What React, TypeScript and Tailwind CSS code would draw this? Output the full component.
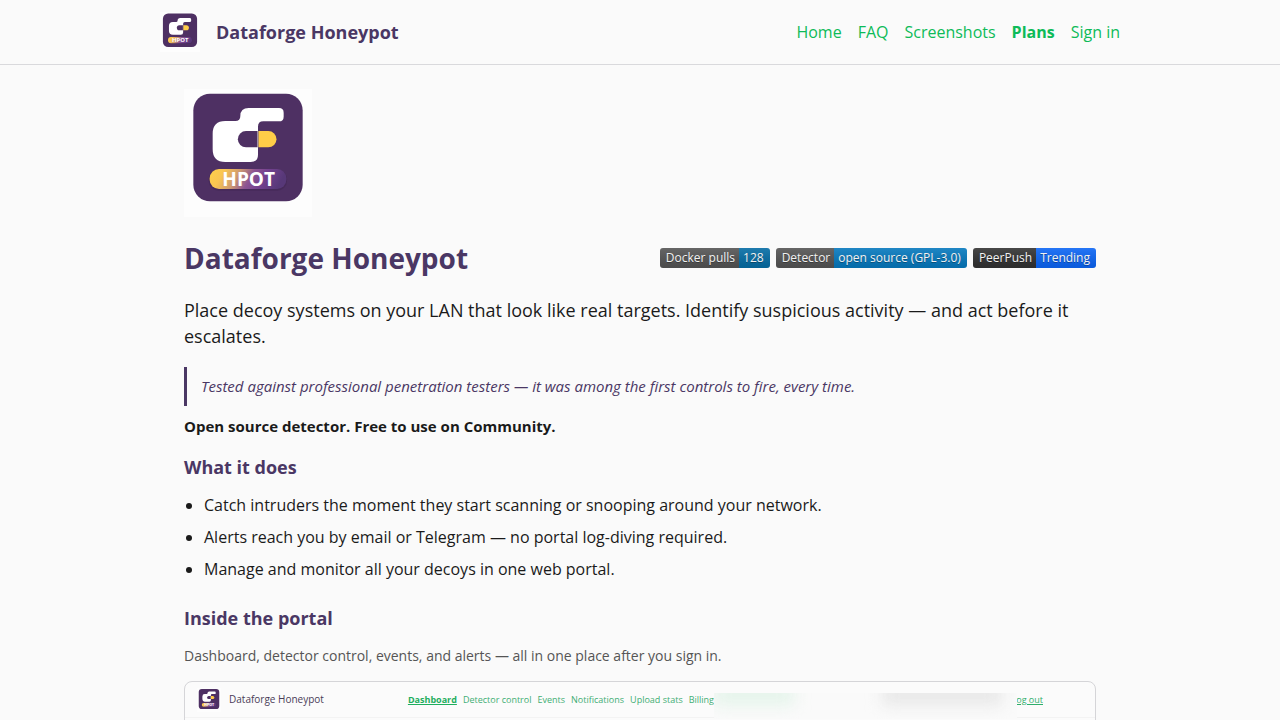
import clsx from "clsx";
import React, { useId } from "react";

const NAV_LINKS = [
  { label: "Home", href: "#home" },
  { label: "FAQ", href: "#faq" },
  { label: "Screenshots", href: "#screenshots" },
  { label: "Plans", href: "#plans", active: true },
  { label: "Sign in", href: "#sign-in" },
];

const BADGES = [
  { label: "Docker pulls", value: "128", labelBg: "bg-[#555555]", valueBg: "bg-[#066da5]" },
  { label: "Detector", value: "open source (GPL-3.0)", labelBg: "bg-[#555555]", valueBg: "bg-[#0779be]" },
  { label: "PeerPush", value: "Trending", labelBg: "bg-[#333333]", valueBg: "bg-[#0d66f5]" },
];

const FEATURES = [
  "Catch intruders the moment they start scanning or snooping around your network.",
  "Alerts reach you by email or Telegram — no portal log-diving required.",
  "Manage and monitor all your decoys in one web portal.",
];

const PORTAL_LINKS = ["Detector control", "Events", "Notifications", "Upload stats", "Billing"];

function Logo({ className }: { className?: string }) {
  const id = useId();
  return (
    <svg viewBox="12 15 384 384" className={className} role="img" aria-label="Dataforge Honeypot">
      <defs>
        <linearGradient id={id} x1="0" y1="0" x2="1" y2="0.15">
          <stop offset="0" stopColor="#ffd04a" />
          <stop offset="0.2" stopColor="#f9c552" />
          <stop offset="0.4" stopColor="#cf9a70" />
          <stop offset="0.58" stopColor="#8d5492" />
          <stop offset="0.75" stopColor="#744290" />
          <stop offset="1" stopColor="#573878" />
        </linearGradient>
      </defs>
      <rect x="12" y="15" width="384" height="384" fill="#fdfdfd" />
      <rect x="40" y="29" width="328" height="323" rx="50" fill="#4e3063" />
      <path
        fill="#fff"
        d="M206 72H297Q311 72 311 86V98Q311 112 297 112H250Q234 112 234 128V212Q234 234 212 234H136Q98 234 98 196V149Q98 111 136 111H166Q181 111 181 96Q181 72 206 72Z"
      />
      <path fill="#4e3063" d="M232 141H198A24.5 24.5 0 0 0 198 190H232Z" />
      <path fill="#ffcd48" d="M235 141H265A24.5 24.5 0 0 1 265 190H235Z" />
      <path fill="#8a7896" d="M232 141H235V190H232Z" />
      <rect x="86" y="257" width="235" height="63" rx="29" fill="#3b224e" opacity="0.4" />
      <rect x="89" y="255" width="230" height="60" rx="28" fill={`url(#${id})`} />
      <text
        x="206"
        y="305"
        textAnchor="middle"
        fontSize="57"
        fontWeight="700"
        fill="#fff"
        className="font-['Open_Sans',sans-serif]"
      >
        HPOT
      </text>
    </svg>
  );
}

function Badge({ label, value, labelBg, valueBg }: (typeof BADGES)[number]) {
  return (
    <a
      href="#badge"
      className="flex h-5 overflow-hidden rounded-[3px] text-xs leading-5 text-[#f2f2f2] text-shadow-[0_1px_0_rgb(1_1_1/0.3)]"
    >
      <span className={clsx("bg-linear-to-b from-white/10 to-black/10 pl-1.5 pr-1", labelBg)}>{label}</span>
      <span className={clsx("bg-linear-to-b from-white/10 to-black/10 pl-1 pr-1.5", valueBg)}>{value}</span>
    </a>
  );
}

function PortalPreview() {
  return (
    <div className="mt-[13px] overflow-hidden rounded-lg border border-[#d5d5d8] bg-[#fbfbfb]">
      <div className="relative flex h-9 items-center border-b border-[#f3f3f3] pl-3 text-[9px]">
        <Logo className="size-6" />
        <span className="ml-2 text-[10px] font-medium text-[#4a3c58]">Dataforge Honeypot</span>
        <nav className="ml-20 flex gap-1.5 pl-1 text-[#3fae74]">
          <a href="#dashboard" className="font-bold text-[#1fae5e] underline">
            Dashboard
          </a>
          {PORTAL_LINKS.map((link) => (
            <a key={link} href="#portal">
              {link}
            </a>
          ))}
        </nav>
        <a href="#logout" className="ml-auto mr-13 text-[#2fae6c] underline">
          Log out
        </a>
        {/* redacted account details */}
        <div className="absolute right-[78px] top-[11px] flex h-[26px] w-[303px] overflow-hidden bg-[#fafafa]">
          <div className="-mt-2 h-5 w-20 bg-[#e4f4ea] blur-[8px]" />
          <div className="-mt-2 ml-[88px] h-5 w-30 bg-[#e7e7e7] blur-[8px]" />
        </div>
      </div>
      <div className="h-96" />
    </div>
  );
}

export default function App() {
  return (
    <div className="min-h-screen bg-[#fafafa] font-['Open_Sans',sans-serif] text-[#1a1a1a]">
      <header className="border-b border-[#d9d9dc]">
        <div className="mx-auto flex h-16 max-w-[960px] items-center justify-between">
          <a href="#home" className="flex items-center gap-4 text-lg font-bold text-[#4a3764]">
            <Logo className="size-10" />
            Dataforge Honeypot
          </a>
          <nav className="flex gap-4">
            {NAV_LINKS.map((link) => (
              <a key={link.label} href={link.href} className={clsx("text-[#0dbb58]", link.active && "font-bold")}>
                {link.label}
              </a>
            ))}
          </nav>
        </div>
      </header>

      <main className="mx-auto max-w-[960px] px-6 pt-6 pb-12">
        <Logo className="size-32" />

        <div className="mt-6 flex items-center justify-between">
          <h1 className="text-[28px] leading-[34px] font-bold text-[#4a3764]">Dataforge Honeypot</h1>
          <div className="flex gap-1.5">
            {BADGES.map((badge) => (
              <Badge key={badge.label} {...badge} />
            ))}
          </div>
        </div>

        <p className="mt-[22px] text-lg leading-[26px]">
          Place decoy systems on your LAN that look like real targets. Identify suspicious activity — and act before it
          escalates.
        </p>

        <blockquote className="mt-[18px] border-l-3 border-[#4a3764] py-2 pl-3.5 text-[15px] leading-[23px] text-[#4a3764] italic">
          Tested against professional penetration testers — it was among the first controls to fire, every time.
        </blockquote>

        <p className="mt-2 text-[15px] leading-6 font-bold">Open source detector. Free to use on Community.</p>

        <h2 className="mt-4 text-lg leading-[26px] font-bold text-[#4a3764]">What it does</h2>
        <ul className="mt-[13px] list-disc space-y-2 pl-5 leading-6">
          {FEATURES.map((feature) => (
            <li key={feature}>{feature}</li>
          ))}
        </ul>

        <h2 className="mt-6 text-lg leading-[26px] font-bold text-[#4a3764]">Inside the portal</h2>
        <p className="mt-[13px] text-sm leading-6 text-[#555555]">
          Dashboard, detector control, events, and alerts — all in one place after you sign in.
        </p>
        <PortalPreview />
      </main>
    </div>
  );
}
